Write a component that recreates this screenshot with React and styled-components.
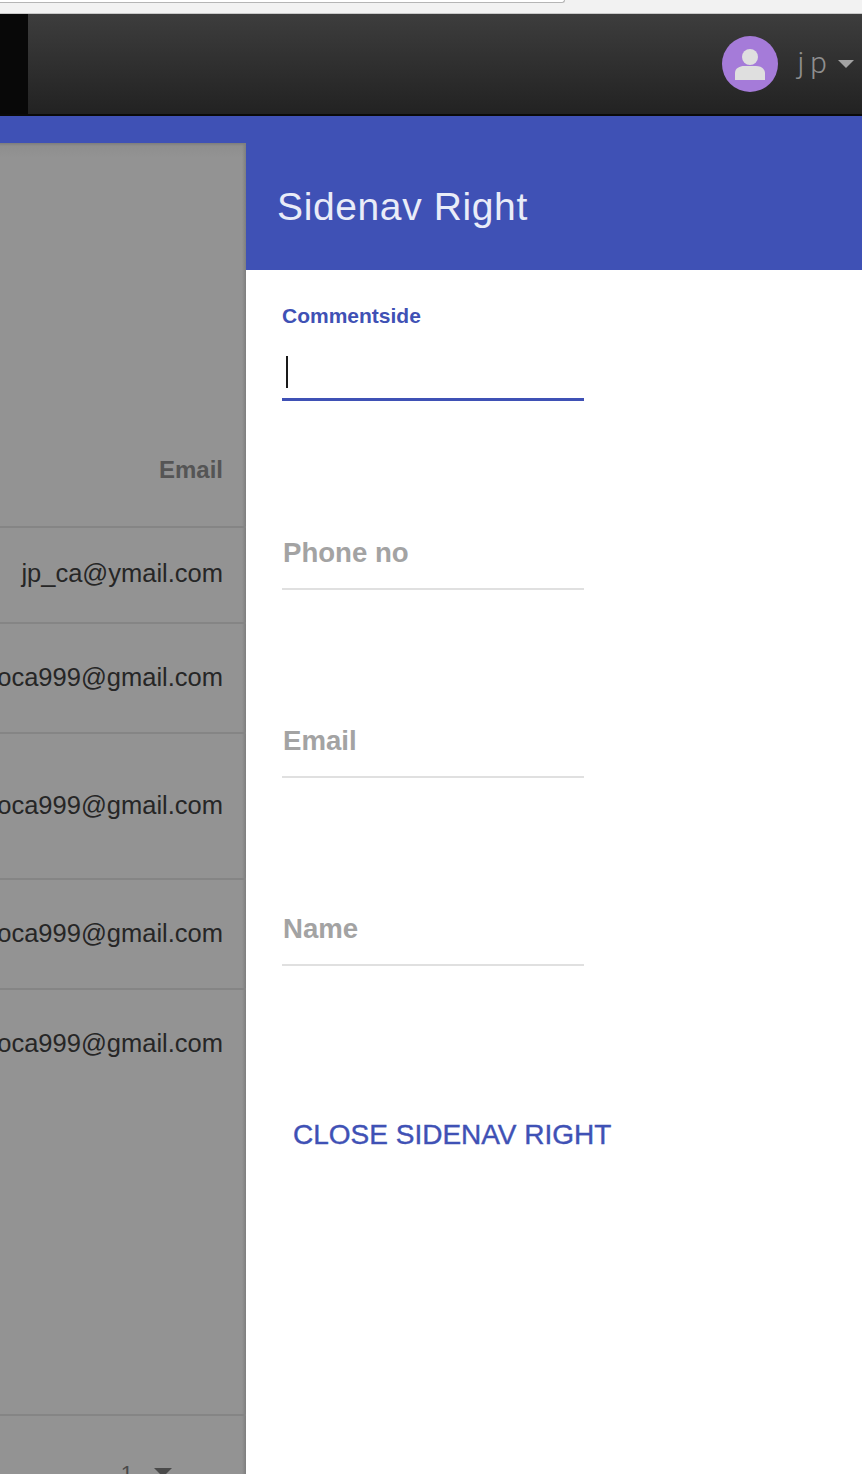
import React from "react";
import styled, { createGlobalStyle } from "styled-components";

const GlobalStyle = createGlobalStyle`
  html, body {
    margin: 0;
    padding: 0;
    background: #fff;
  }
  body {
    font-family: "Liberation Sans", Arial, sans-serif;
  }
`;

const Page = styled.div`
  width: 862px;
  height: 1474px;
  overflow: hidden;
  display: flex;
  flex-direction: column;
`;

const BrowserBar = styled.div`
  height: 13px;
  flex: none;
  background: #f2f2f2;
  border-bottom: 1px solid #c9c9c9;
`;

const UrlBox = styled.div`
  width: 564px;
  height: 2px;
  background: #fff;
  border: 1px solid #b5b5b5;
  border-top: none;
  border-left: none;
  border-bottom-right-radius: 5px;
`;

const TopNav = styled.header`
  height: 100px;
  flex: none;
  display: flex;
  align-items: center;
  background: linear-gradient(#3d3d3d, #222222);
  border-bottom: 2px solid #0a0a0a;
`;

const BrandBlock = styled.div`
  width: 28px;
  align-self: stretch;
  background: #080808;
`;

const UserMenu = styled.div`
  margin-left: auto;
  display: flex;
  align-items: center;
  padding-right: 8px;
`;

const Avatar = styled.div`
  width: 56px;
  height: 56px;
  border-radius: 50%;
  background: #a57bd9;
  display: flex;
  align-items: center;
  justify-content: center;
`;

const UserName = styled.span`
  margin-left: 20px;
  font-family: Roboto, "Liberation Sans", sans-serif;
  font-size: 30px;
  font-weight: 300;
  letter-spacing: 6px;
  color: #8f8f8f;
  line-height: 1;
  position: relative;
  top: -1px;
`;

const Caret = styled.span`
  margin-left: 5px;
  width: 0;
  height: 0;
  border-left: 8px solid transparent;
  border-right: 8px solid transparent;
  border-top: 8px solid #a3a3a3;
`;

const Body = styled.div`
  flex: 1;
  min-height: 0;
  display: flex;
`;

const LeftColumn = styled.div`
  width: 246px;
  flex: none;
  display: flex;
  flex-direction: column;
  background: #3f51b5;
`;

const TablePanel = styled.section`
  margin-top: 27px;
  flex: 1;
  min-height: 0;
  display: flex;
  flex-direction: column;
  background:
    linear-gradient(to left, #7e7e7e, rgba(147, 147, 147, 0) 4px),
    linear-gradient(#7c7c7c, #8e8e8e 3px, #939393 14px);
  overflow: hidden;
`;

const HeadRow = styled.div`
  height: 385px;
  flex: none;
  box-sizing: border-box;
  display: flex;
  align-items: flex-end;
  justify-content: flex-end;
  padding: 0 23px 42px 0;
  border-bottom: 2px solid #858585;
  font-size: 24px;
  font-weight: 700;
  color: #555;
`;

const Row = styled.div`
  height: ${(p) => p.$height}px;
  flex: none;
  box-sizing: border-box;
  display: flex;
  justify-content: flex-end;
  padding: ${(p) => p.$top}px 23px 0 0;
  border-bottom: ${(p) => (p.$last ? "none" : "2px solid #858585")};
  font-size: 25.5px;
  line-height: 30px;
  color: #262626;
  white-space: nowrap;
`;

const EmptyArea = styled.div`
  flex: 1;
  border-bottom: 2px solid #858585;
`;

const Footer = styled.div`
  height: 58px;
  flex: none;
  display: flex;
  justify-content: flex-end;
  align-items: flex-start;
  padding: 46px 74px 0 0;
  box-sizing: border-box;
  font-size: 22px;
  line-height: 24px;
  color: #4a4a4a;
`;

const PageCaret = styled.span`
  margin: 6px 0 0 21px;
  width: 0;
  height: 0;
  border-left: 9px solid transparent;
  border-right: 9px solid transparent;
  border-top: 9px solid #4a4a4a;
`;

const Sidenav = styled.aside`
  flex: 1;
  display: flex;
  flex-direction: column;
  background: #fff;
`;

const SidenavHeader = styled.div`
  height: 154px;
  flex: none;
  box-sizing: border-box;
  padding: 68px 0 0 31px;
  background: #3f51b5;
  color: #e9ecf8;
  font-size: 39px;
  line-height: 46px;
  font-weight: 400;
  letter-spacing: 0.62px;
`;

const Form = styled.form`
  display: flex;
  flex-direction: column;
  padding: 32px 0 0 36px;
`;

const Field = styled.div`
  width: 302px;
  height: ${(p) => p.$height}px;
  box-sizing: border-box;
  margin-bottom: ${(p) => p.$gap}px;
  display: flex;
  flex-direction: column;
  justify-content: flex-end;
  border-bottom: ${(p) => (p.$active ? "3px solid #3f51b5" : "2px solid #e0e0e0")};
`;

const ActiveLabel = styled.label`
  font-size: 21px;
  line-height: 26px;
  font-weight: 700;
  color: #3f51b5;
  margin-bottom: 27px;
`;

const Cursor = styled.span`
  display: block;
  width: 2px;
  height: 32px;
  background: #1a1a1a;
  margin: 0 0 10px 4px;
`;

const Placeholder = styled.label`
  font-size: 27.6px;
  line-height: 32px;
  font-weight: 700;
  color: #a3a3a3;
  margin: 0 0 19px 1px;
`;

const CloseButton = styled.button`
  align-self: flex-start;
  border: none;
  background: none;
  padding: 0;
  margin: 152px 0 0 11px;
  font-family: inherit;
  font-size: 28px;
  line-height: 34px;
  color: #3f51b5;
  text-transform: uppercase;
  white-space: nowrap;
  -webkit-text-stroke: 0.4px #3f51b5;
`;

const rows = [
  { email: "jp_ca@ymail.com", height: 96, top: 30 },
  { email: "joca999@gmail.com", height: 110, top: 38 },
  { email: "joca999@gmail.com", height: 146, top: 56 },
  { email: "joca999@gmail.com", height: 110, top: 38 },
];

const App = () => (
  <Page>
    <GlobalStyle />
    <BrowserBar>
      <UrlBox />
    </BrowserBar>
    <TopNav>
      <BrandBlock />
      <UserMenu>
        <Avatar>
          <svg width="30" height="31" viewBox="0 0 30 31" fill="#dfdfdf">
            <circle cx="15" cy="8" r="8" />
            <path d="M0 31v-7c0-5 5-7 9-7h12c4 0 9 2 9 7v7z" />
          </svg>
        </Avatar>
        <UserName>jp</UserName>
        <Caret />
      </UserMenu>
    </TopNav>
    <Body>
      <LeftColumn>
        <TablePanel>
          <HeadRow>Email</HeadRow>
          {rows.map((row, i) => (
            <Row key={i} $height={row.height} $top={row.top}>
              {row.email}
            </Row>
          ))}
          <Row $height={100} $top={38} $last>
            joca999@gmail.com
          </Row>
          <EmptyArea />
          <Footer>
            1
            <PageCaret />
          </Footer>
        </TablePanel>
      </LeftColumn>
      <Sidenav>
        <SidenavHeader>Sidenav Right</SidenavHeader>
        <Form>
          <Field $active $height={99} $gap={89}>
            <ActiveLabel>Commentside</ActiveLabel>
            <Cursor />
          </Field>
          <Field $height={100} $gap={88}>
            <Placeholder>Phone no</Placeholder>
          </Field>
          <Field $height={100} $gap={88}>
            <Placeholder>Email</Placeholder>
          </Field>
          <Field $height={100} $gap={0}>
            <Placeholder>Name</Placeholder>
          </Field>
          <CloseButton type="button">Close Sidenav Right</CloseButton>
        </Form>
      </Sidenav>
    </Body>
  </Page>
);

export default App;
